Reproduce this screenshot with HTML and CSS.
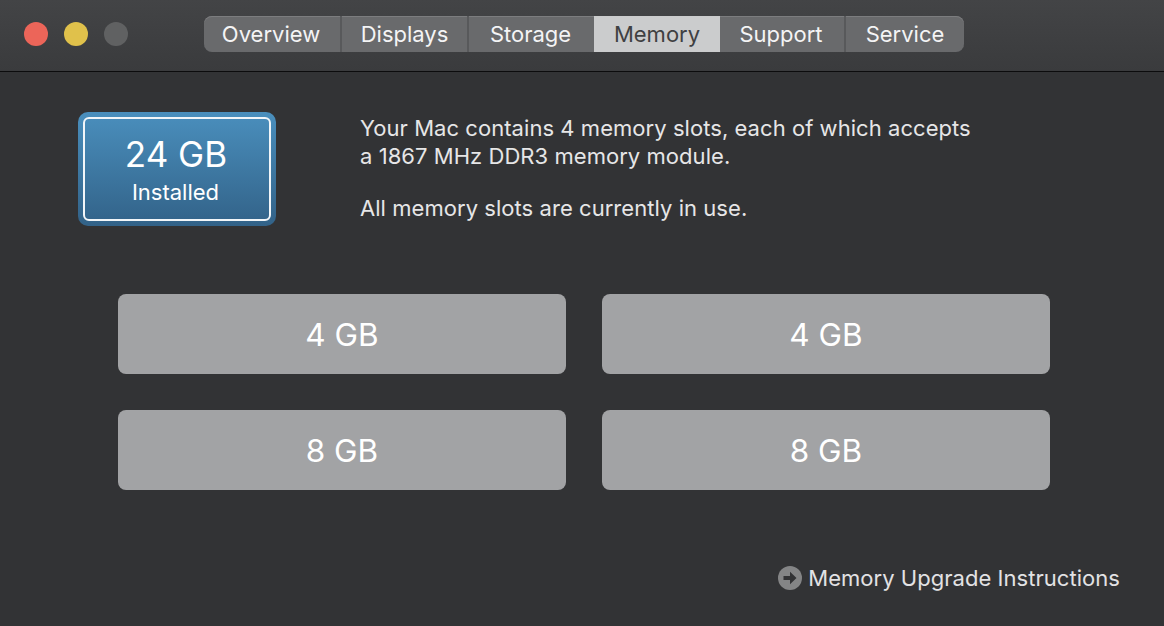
FILE: index.html
```html
<!DOCTYPE html>
<html lang="en">
<head>
  <meta charset="UTF-8">
  <meta name="viewport" content="width=device-width, initial-scale=1.0">
  <title>About This Mac - Memory</title>
  <link rel="stylesheet" href="styles.css">
</head>
<body>
  <header class="titlebar">
    <div class="lights">
      <span class="light red"></span>
      <span class="light yellow"></span>
      <span class="light gray"></span>
    </div>
    <nav class="tabs">
      <a class="tab">Overview</a>
      <a class="tab">Displays</a>
      <a class="tab">Storage</a>
      <a class="tab active">Memory</a>
      <a class="tab">Support</a>
      <a class="tab">Service</a>
    </nav>
  </header>

  <main class="content">
    <section class="summary">
      <div class="installed">
        <div class="installed-inner">
          <div class="installed-size">24 GB</div>
          <div class="installed-label">Installed</div>
        </div>
      </div>
      <div class="description">
        <p>Your Mac contains 4 memory slots, each of which accepts<br>a 1867 MHz DDR3 memory module.</p>
        <p>All memory slots are currently in use.</p>
      </div>
    </section>

    <section class="slots">
      <div class="slot">4 GB</div>
      <div class="slot">4 GB</div>
      <div class="slot">8 GB</div>
      <div class="slot">8 GB</div>
    </section>

    <footer class="footer">
      <a class="upgrade">
        <svg class="upgrade-icon" viewBox="0 0 24 24" width="24" height="24">
          <circle cx="12" cy="12" r="12" fill="#848586"/>
          <path d="M5.5 10h6.5V5.8L18.5 12 12 18.2V14H5.5z" fill="#323335"/>
        </svg>
        Memory Upgrade Instructions
      </a>
    </footer>
  </main>
</body>
</html>
```

FILE: styles.css
```css
* { box-sizing: border-box; }
html, body { height: 100%; }
body { margin: 0; background: #323335; color: #e6e6e7; font-family: Inter, 'Noto Sans', sans-serif; overflow: hidden; }

.titlebar { display: flex; align-items: flex-start; height: 72px; padding: 16px 0 0 24px; background: linear-gradient(#434446, #3a3b3d); border-bottom: 1px solid #0c0c0d; }
.lights { display: flex; gap: 16px; padding-top: 6px; }
.light { width: 24px; height: 24px; border-radius: 50%; }
.red { background: #ec6559; }
.yellow { background: #e0c14b; }
.gray { background: #606162; }

.tabs { display: grid; grid-template-columns: 138px 127px 125px 126px 126px 118px; height: 36px; margin-left: 76px; border-radius: 8px; overflow: hidden; background: #696a6c; box-shadow: inset 0 1px 0 #7c7d7f; }
.tab { display: flex; align-items: center; justify-content: center; font-size: 22px; color: #f4f4f5; border-right: 2px solid #58595b; }
.tab:nth-child(odd) { padding-right: 2px; }
.tab:last-child { border-right: 0; }
.tab:nth-child(3) { border-right: 0; }
.tab.active { background: #cbcccd; color: #3f4042; border-right: 0; }

.content { padding: 40px 44px 0 78px; }
.summary { display: flex; }
.installed { width: 198px; height: 114px; padding: 5px; border-radius: 10px; background: linear-gradient(#4a8fbd, #326288); }
.installed-inner { display: flex; flex-direction: column; align-items: center; height: 100%; padding-top: 15px; border: 2px solid #f2f6f9; border-radius: 6px; color: #fff; }
.installed-size { margin-right: 2px; font-size: 35px; line-height: 40px; }
.installed-label { margin-top: 5px; margin-right: 3px; font-size: 22px; line-height: 26px; }

.description { margin-left: 84px; font-size: 22px; line-height: 28px; letter-spacing: 0.05px; }
.description p { margin: 0 0 24px; }
.description p:first-child { margin-top: 2px; }

.slots { display: grid; grid-template-columns: 448px 448px; grid-auto-rows: 80px; gap: 36px; margin: 48px 0 0 40px; }
.slot { display: flex; align-items: center; justify-content: center; border-radius: 8px; background: #a2a3a5; color: #fff; font-size: 31.5px; }

.footer { display: flex; justify-content: flex-end; margin-top: 76px; }
.upgrade { display: flex; align-items: center; gap: 6px; font-size: 22px; line-height: 24px; letter-spacing: 0.04px; color: #e2e2e4; }
```
